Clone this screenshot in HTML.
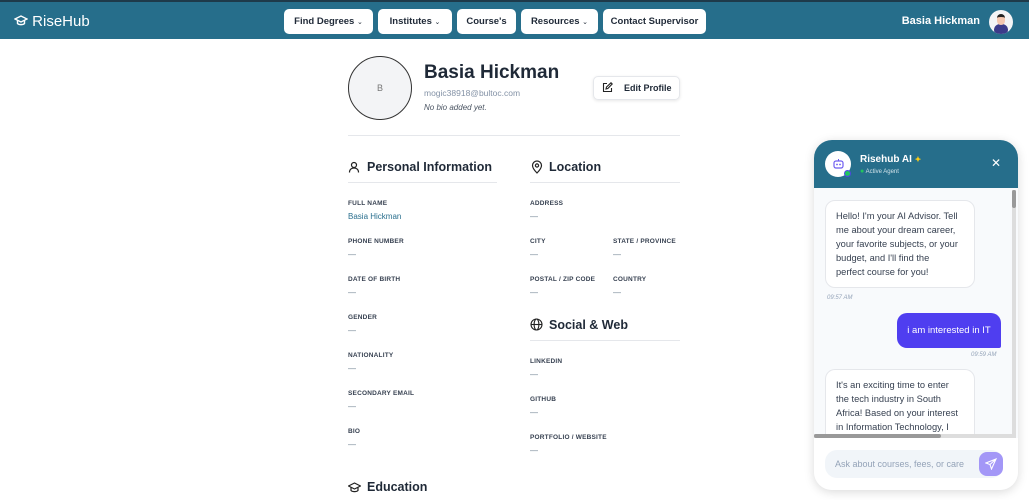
<!DOCTYPE html><html><head><style>
*{box-sizing:border-box;margin:0;padding:0}
body{width:1029px;height:500px;overflow:hidden;background:#fff;font-family:"Liberation Sans",sans-serif;color:#1f2937;position:relative}
.nav{position:absolute;left:0;top:0;width:1029px;height:39px;background:#266e8b;border-top:2px solid #1e3a4a}
.logo{position:absolute;left:14px;top:11px;color:#fff;font-size:15px}
.btn{position:absolute;top:7px;height:25px;background:#fff;border-radius:5px;font-size:9.5px;font-weight:bold;color:#1f2937;line-height:25px;text-align:center}
.btn small{font-size:7px;font-weight:normal}
.uname{position:absolute;right:49px;top:13px;color:#fff;font-size:11px;font-weight:bold}
.av{position:absolute;left:989px;top:8px;width:24px;height:24px;border-radius:50%;background:#f3f4f6;overflow:hidden}
.ab{position:absolute}
.lbl{position:absolute;font-size:6.5px;font-weight:bold;color:#374151;letter-spacing:.2px}
.val{position:absolute;font-size:8px;color:#6b7f8e}
.h{position:absolute;font-size:12.5px;font-weight:bold;color:#1f2937}
.hl{position:absolute;height:1px;background:#e5e7eb}
.chat{position:absolute;left:814px;top:140px;width:204px;height:350px;border-radius:18px;background:#f8fafc;box-shadow:0 2px 10px rgba(0,0,0,.15);overflow:hidden}
.bub{position:absolute;background:#fff;border:1px solid #e5e7eb;border-radius:10px;font-size:9.3px;line-height:14px;color:#374151;padding:8px 10px}
.t{position:absolute;font-size:6px;font-style:italic;color:#94a3b8}
</style></head><body>
<div class="nav">
<div class="logo"><svg width="14" height="12" viewBox="0 0 14 12" style="vertical-align:-1px"><path d="M1 4L7 1l6 3-6 3z M3.5 5.5v3c1.5 1.5 5.5 1.5 7 0v-3" fill="none" stroke="#fff" stroke-width="1.4"/></svg> RiseHub</div>
<div class="btn" style="left:284px;width:89px">Find Degrees <small>⌄</small></div>
<div class="btn" style="left:378px;width:74px">Institutes <small>⌄</small></div>
<div class="btn" style="left:457px;width:59px">Course's</div>
<div class="btn" style="left:521px;width:77px">Resources <small>⌄</small></div>
<div class="btn" style="left:603px;width:103px">Contact Supervisor</div>
<div class="uname">Basia Hickman</div>
<div class="av"><div style="position:absolute;left:5px;top:14px;width:14px;height:12px;border-radius:6px;background:#3b3b8a"></div><div style="position:absolute;left:8px;top:4px;width:8px;height:11px;border-radius:4px;background:#f4c7b0;border-top:3px solid #222"></div></div>
</div>
<div class="ab" style="left:348px;top:56px;width:64px;height:64px;border-radius:50%;border:1.5px solid #333;background:#f3f4f6;text-align:center;line-height:62px;font-size:9px;color:#777">B</div>
<div class="ab" style="left:424px;top:62px;font-size:19px;font-weight:bold;color:#1f2937">Basia Hickman</div>
<div class="ab" style="left:424px;top:88px;font-size:8.5px;color:#8492a6">mogic38918@bultoc.com</div>
<div class="ab" style="left:424px;top:103px;font-size:8px;font-style:italic;color:#4b5563">No bio added yet.</div>
<div class="ab" style="left:593px;top:76px;width:87px;height:24px;border:1px solid #e5e7eb;border-radius:5px;box-shadow:0 1px 3px rgba(0,0,0,.1);font-size:9px;font-weight:bold;line-height:22px;padding-left:30px">Edit Profile</div>
<svg class="ab" style="left:602px;top:82px" width="11" height="11" viewBox="0 0 11 11"><path d="M5 1.5H1.5v8h8V6M4 7l.5-2L9 .8l1.2 1.2L5.8 6.5z" fill="none" stroke="#222" stroke-width="1.1"/></svg>
<div class="hl" style="left:348px;top:135px;width:332px"></div>
<svg class="ab" style="left:348px;top:161px" width="12" height="12" viewBox="0 0 12 12"><circle cx="6" cy="4" r="2.5" fill="none" stroke="#222" stroke-width="1.2"/><path d="M1.5 11.5c0-3 2-4.5 4.5-4.5s4.5 1.5 4.5 4.5" fill="none" stroke="#222" stroke-width="1.2"/></svg>
<div class="h" style="left:367px;top:160px">Personal Information</div>
<div class="hl" style="left:348px;top:182px;width:149px"></div>
<svg class="ab" style="left:531px;top:160px" width="12" height="14" viewBox="0 0 12 14"><path d="M6 13C2 9 1.5 7 1.5 5.5a4.5 4.5 0 019 0C10.5 7 10 9 6 13z" fill="none" stroke="#222" stroke-width="1.2"/><circle cx="6" cy="5.5" r="1.6" fill="none" stroke="#222" stroke-width="1.2"/></svg>
<div class="h" style="left:549px;top:160px">Location</div>
<div class="hl" style="left:530px;top:182px;width:150px"></div>
<div class="lbl" style="left:348px;top:200px">FULL NAME</div><div class="val" style="left:348px;top:212px;color:#2a6f8e">Basia Hickman</div>
<div class="lbl" style="left:348px;top:238px">PHONE NUMBER</div><div class="val" style="left:348px;top:250px">—</div>
<div class="lbl" style="left:348px;top:276px">DATE OF BIRTH</div><div class="val" style="left:348px;top:288px">—</div>
<div class="lbl" style="left:348px;top:314px">GENDER</div><div class="val" style="left:348px;top:326px">—</div>
<div class="lbl" style="left:348px;top:352px">NATIONALITY</div><div class="val" style="left:348px;top:364px">—</div>
<div class="lbl" style="left:348px;top:390px">SECONDARY EMAIL</div><div class="val" style="left:348px;top:402px">—</div>
<div class="lbl" style="left:348px;top:428px">BIO</div><div class="val" style="left:348px;top:440px">—</div>
<div class="lbl" style="left:530px;top:200px">ADDRESS</div><div class="val" style="left:530px;top:212px">—</div>
<div class="lbl" style="left:530px;top:238px">CITY</div><div class="val" style="left:530px;top:250px">—</div>
<div class="lbl" style="left:613px;top:238px">STATE / PROVINCE</div><div class="val" style="left:613px;top:250px">—</div>
<div class="lbl" style="left:530px;top:276px">POSTAL / ZIP CODE</div><div class="val" style="left:530px;top:288px">—</div>
<div class="lbl" style="left:613px;top:276px">COUNTRY</div><div class="val" style="left:613px;top:288px">—</div>
<svg class="ab" style="left:530px;top:318px" width="13" height="13" viewBox="0 0 13 13"><g fill="none" stroke="#222" stroke-width="1.1"><circle cx="6.5" cy="6.5" r="5.5"/><ellipse cx="6.5" cy="6.5" rx="2.4" ry="5.5"/><path d="M1 6.5h11"/></g></svg>
<div class="h" style="left:549px;top:318px">Social &amp; Web</div>
<div class="hl" style="left:530px;top:340px;width:150px"></div>
<div class="lbl" style="left:530px;top:358px">LINKEDIN</div><div class="val" style="left:530px;top:370px">—</div>
<div class="lbl" style="left:530px;top:396px">GITHUB</div><div class="val" style="left:530px;top:408px">—</div>
<div class="lbl" style="left:530px;top:434px">PORTFOLIO / WEBSITE</div><div class="val" style="left:530px;top:446px">—</div>
<svg class="ab" style="left:348px;top:482px" width="13" height="11" viewBox="0 0 13 11"><path d="M.5 4L6.5 1l6 3-6 3z M3 5.5v3c1.5 1.5 5.5 1.5 7 0v-3" fill="none" stroke="#222" stroke-width="1.2"/></svg>
<div class="h" style="left:367px;top:480px">Education</div>
<div class="chat">
<div style="position:absolute;left:0;top:0;width:204px;height:48px;background:#266e8b"></div>
<div style="position:absolute;left:11px;top:11px;width:26px;height:26px;border-radius:50%;background:#fff"></div>
<svg style="position:absolute;left:19px;top:18px" width="11" height="11" viewBox="0 0 11 11"><rect x="1" y="3" width="9" height="7" rx="2" fill="none" stroke="#6d5cf0" stroke-width="1.2"/><circle cx="4" cy="6.5" r=".9" fill="#6d5cf0"/><circle cx="7" cy="6.5" r=".9" fill="#6d5cf0"/><path d="M5.5 3V1" stroke="#6d5cf0"/></svg>
<div style="position:absolute;left:30px;top:30px;width:7px;height:7px;border-radius:50%;background:#22c55e;border:1px solid #4f46e5"></div>
<div style="position:absolute;left:46px;top:14px;color:#fff;font-size:10px;font-weight:bold">Risehub AI <span style="color:#facc15;font-size:8px">✦</span></div>
<div style="position:absolute;left:46px;top:28px;color:#d1e3ea;font-size:6px"><span style="color:#22c55e;font-size:7px">●</span> Active Agent</div>
<div style="position:absolute;left:177px;top:16px;color:#fff;font-size:12px">✕</div>
<div class="bub" style="left:11px;top:60px;width:150px;padding-right:6px">Hello! I'm your AI Advisor. Tell me about your dream career, your favorite subjects, or your budget, and I'll find the<br>perfect course for you!</div>
<div class="t" style="left:13px;top:155px">09:57 AM</div>
<div style="position:absolute;left:83px;top:173px;width:104px;height:35px;background:#4f3ef0;border-radius:10px 10px 2px 10px;color:#fff;font-size:9.5px;line-height:35px;text-align:center">i am interested in IT</div>
<div class="t" style="left:157px;top:212px">09:59 AM</div>
<div class="bub" style="left:11px;top:229px;width:150px;height:80px;border-bottom:none;border-radius:10px 10px 0 0">It's an exciting time to enter the tech industry in South Africa! Based on your interest in Information Technology, I</div>
<div style="position:absolute;left:198px;top:50px;width:4px;height:244px;background:#ddd"></div>
<div style="position:absolute;left:198px;top:50px;width:4px;height:18px;background:#999;border-radius:2px"></div>
<div style="position:absolute;left:0;top:294px;width:202px;height:4px;background:#ddd"></div>
<div style="position:absolute;left:0;top:294px;width:127px;height:4px;background:#999;border-radius:2px"></div>
<div style="position:absolute;left:0;top:298px;width:204px;height:52px;background:#fff"></div>
<div style="position:absolute;left:11px;top:310px;width:178px;height:28px;border-radius:12px;background:#f1f5f9;font-size:9px;color:#94a3b8;line-height:28px;padding-left:10px;overflow:hidden;white-space:nowrap">Ask about courses, fees, or care</div>
<div style="position:absolute;left:165px;top:312px;width:24px;height:24px;border-radius:8px;background:#a397f7"></div>
<svg style="position:absolute;left:171px;top:318px" width="12" height="12" viewBox="0 0 12 12"><path d="M11 1L1 5l4 1.5L6.5 11zM5 6.5L11 1" fill="none" stroke="#fff" stroke-width="1.1"/></svg>
</div>
</body></html>
